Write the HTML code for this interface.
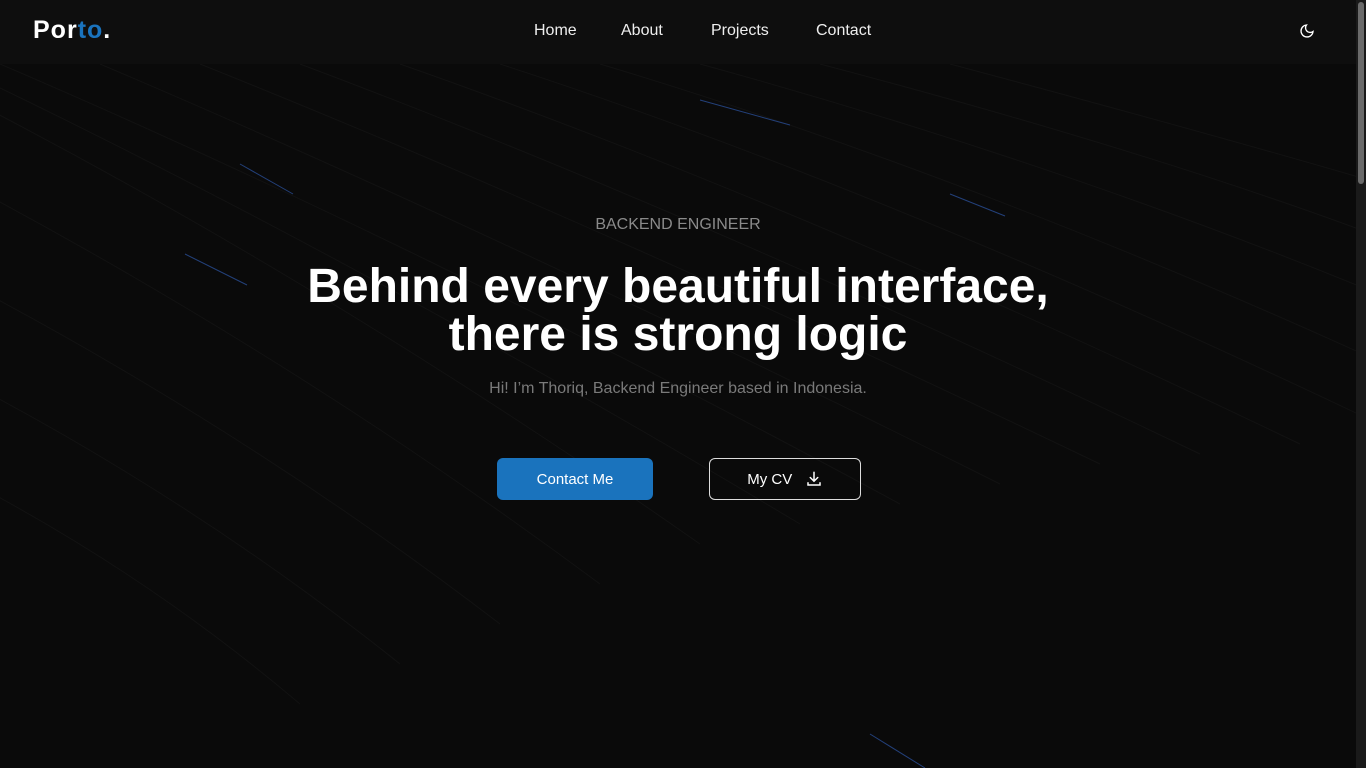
<!DOCTYPE html>
<html><head><meta charset="utf-8"><style>
html,body{margin:0;padding:0;width:1366px;height:768px;overflow:hidden;background:#0a0a0a;font-family:"Liberation Sans",sans-serif;color:#fff}
.hdr{position:absolute;left:0;top:0;width:1356px;height:64px;background:#0e0e0e;z-index:2}
.logo{position:absolute;left:33px;top:16px;font-size:25px;font-weight:bold;letter-spacing:1px}
.logo span{color:#1a73bd}
.nav{position:absolute;top:22px;font-size:16px;color:#eee}
.bg{position:absolute;left:0;top:64px;width:1356px;height:704px}
.sb{position:absolute;right:0;top:0;width:10px;height:768px;background:#1a1a1a}
.sb div{position:absolute;left:2px;top:2px;width:6px;height:182px;background:#6a6a6a;border-radius:3px}
.c{position:absolute;left:0;width:1356px;text-align:center}
.btn{position:absolute;top:458px;height:42px;border-radius:6px;font-size:15px;display:flex;align-items:center;justify-content:center;box-sizing:border-box}
</style></head><body>
<div class="hdr">
<div class="logo">Por<span>to</span>.</div>
<div class="nav" style="left:534px">Home</div>
<div class="nav" style="left:621px">About</div>
<div class="nav" style="left:711px">Projects</div>
<div class="nav" style="left:816px">Contact</div>
<svg style="position:absolute;left:1299px;top:23px" width="16" height="16" viewBox="0 0 24 24" fill="none" stroke="#fff" stroke-width="2"><path d="M21 12.8A9 9 0 1 1 11.2 3a7 7 0 0 0 9.8 9.8z"/></svg>
</div>
<svg class="bg" viewBox="0 0 1356 704">
<g stroke="#121212" stroke-width="1" fill="none">
<path d="M-100 0 Q 300 200 700 480"/><path d="M-50 0 Q 350 190 800 460"/><path d="M0 0 Q 420 180 900 440"/><path d="M100 0 Q 500 170 1000 420"/><path d="M200 0 Q 600 160 1100 400"/><path d="M300 0 Q 700 150 1200 390"/><path d="M400 0 Q 800 140 1300 380"/><path d="M500 0 Q 900 130 1400 370"/><path d="M600 0 Q 1000 120 1450 330"/><path d="M700 0 Q 1100 110 1450 260"/><path d="M820 0 Q 1200 100 1450 200"/><path d="M950 0 Q 1250 80 1450 140"/><path d="M-150 60 Q 250 260 600 520"/><path d="M-150 160 Q 200 330 500 560"/><path d="M-150 260 Q 150 400 400 600"/><path d="M-150 360 Q 100 470 300 640"/>
</g>
<g stroke="#23407a" stroke-width="1"><line x1="700" y1="36" x2="790" y2="61"/><line x1="240" y1="100" x2="293" y2="130"/><line x1="950" y1="130" x2="1005" y2="152"/><line x1="185" y1="190" x2="247" y2="221"/><line x1="870" y1="670" x2="925" y2="704"/></g>
</svg>
<div class="sb"><div></div></div>
<div class="c" style="top:216px;font-size:16px;color:#8a8a8a">BACKEND ENGINEER</div>
<div class="c" style="top:263px;font-size:48px;font-weight:bold;line-height:48px;letter-spacing:0">Behind every beautiful interface,<br>there is strong logic</div>
<div class="c" style="top:380px;font-size:16px;color:#7a7a7a">Hi! I’m Thoriq, Backend Engineer based in Indonesia.</div>
<div class="btn" style="left:497px;width:156px;background:#1a73bd">Contact Me</div>
<div class="btn" style="left:709px;width:152px;border:1px solid #ddd">My CV&nbsp;&nbsp;&nbsp;<svg width="18" height="18" viewBox="0 0 24 24" fill="none" stroke="#fff" stroke-width="2" stroke-linecap="round"><path d="M12 3v12M7 10l5 5 5-5M4 17v3h16v-3"/></svg></div>
</body></html>
